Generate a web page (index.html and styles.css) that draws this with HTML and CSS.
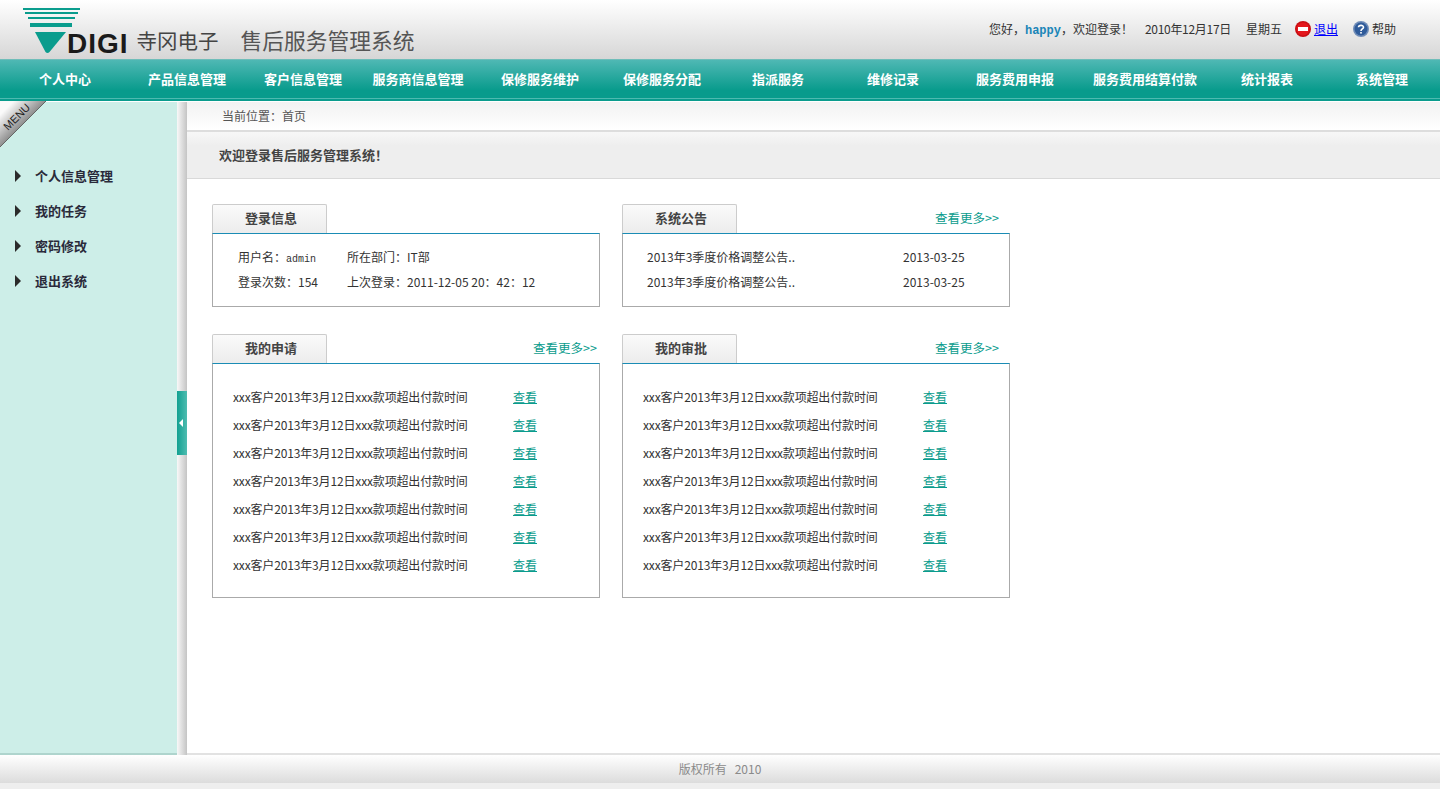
FILE: index.html
```html
<!DOCTYPE html>
<html lang="zh-CN">
<head>
  <meta charset="UTF-8" />
  <title>售后服务管理系统</title>
  <link rel="stylesheet" href="styles.css">
</head>
<body>

  <div class="top">
    <div class="logo">
      <svg class="logo-mark" width="57" height="46" viewBox="0 0 57 46">
        <path d="M0 0H57V2H0z M2 4H55V6H2z M5 9H52V11H5z M7 15H49V19H7z" fill="#0a9c8d"/>
        <path d="M12 24H43L26.500 44Q24.500 46 22.500 44z" fill="#0a9c8d"/>
      </svg>
      <span class="logo-en">DIGI</span>
      <span class="logo-cn">寺冈电子</span>
      <span class="logo-title">售后服务管理系统</span>
    </div>
    <div class="user-bar">
      <span class="greet">您好，<b>happy</b>，欢迎登录！</span>
      <span class="date">2010年12月17日</span>
      <span class="week">星期五</span>
      <svg width="16" height="16" viewBox="0 0 16 16">
        <circle cx="8" cy="8" r="8" fill="#c80f14"/>
        <circle cx="8" cy="8" r="6.500" fill="#e4171c"/>
        <rect x="3" y="6" width="10" height="4" fill="#fff"/>
      </svg>
      <a class="logout" href="#">退出</a>
      <svg class="help-icon" width="16" height="16" viewBox="0 0 16 16">
        <circle cx="8" cy="8" r="8" fill="#6f8cb8"/>
        <circle cx="8" cy="8" r="6.500" fill="#2f5b9a"/>
        <path d="M5.500 6.300C5.700 3.700 10.500 3.700 10.500 6.200C10.500 8 8 8 8 10" fill="none" stroke="#fff" stroke-width="1.600"/>
        <rect x="7.200" y="11" width="1.600" height="1.600" fill="#fff"/>
      </svg>
      <span>帮助</span>
    </div>
  </div>

  <div class="nav">
    <a href="#">个人中心</a>
    <a href="#">产品信息管理</a>
    <a href="#">客户信息管理</a>
    <a href="#">服务商信息管理</a>
    <a href="#">保修服务维护</a>
    <a href="#">保修服务分配</a>
    <a href="#">指派服务</a>
    <a href="#">维修记录</a>
    <a href="#">服务费用申报</a>
    <a href="#">服务费用结算付款</a>
    <a href="#">统计报表</a>
    <a href="#">系统管理</a>
  </div>

  <div class="middle">
    <div class="side">
      <svg class="menu-tag" width="46" height="46" viewBox="0 0 46 46">
        <defs>
          <linearGradient id="tag" x1="0" y1="0" x2="0.500" y2="0.500">
            <stop offset="0.300" stop-color="#fafafa"/>
            <stop offset="1" stop-color="#8f8f8f"/>
          </linearGradient>
        </defs>
        <path d="M0 0H46L0 46z" fill="url(#tag)"/>
        <path d="M0 46L46 0" stroke="#666" fill="none"/>
        <text class="menu-tag-text" transform="translate(8 30) rotate(-45)">MENU</text>
      </svg>
      <ul class="side-list">
        <li>个人信息管理</li>
        <li>我的任务</li>
        <li>密码修改</li>
        <li>退出系统</li>
      </ul>
    </div>
    <div class="splitter"><span class="handle"></span></div>

    <div class="main">
      <div class="crumb">当前位置：首页</div>
      <div class="welcome">欢迎登录售后服务管理系统！</div>

      <div class="panels">
        <div class="panel">
          <div class="panel-head"><span class="tab">登录信息</span></div>
          <div class="panel-body info">
            <span>用户名：<span class="mono">admin</span></span><span>所在部门：IT部</span>
            <span>登录次数：154</span><span>上次登录：2011-12-05 20：42：12</span>
          </div>
        </div>

        <div class="panel">
          <div class="panel-head"><span class="tab">系统公告</span><a class="more far" href="#">查看更多&gt;&gt;</a></div>
          <div class="panel-body notice">
            <span>2013年3季度价格调整公告..</span><span>2013-03-25</span>
            <span>2013年3季度价格调整公告..</span><span>2013-03-25</span>
          </div>
        </div>

        <div class="panel">
          <div class="panel-head"><span class="tab">我的申请</span><a class="more" href="#">查看更多&gt;&gt;</a></div>
          <div class="panel-body rows">
            <span>xxx客户2013年3月12日xxx款项超出付款时间</span><a href="#">查看</a>
            <span>xxx客户2013年3月12日xxx款项超出付款时间</span><a href="#">查看</a>
            <span>xxx客户2013年3月12日xxx款项超出付款时间</span><a href="#">查看</a>
            <span>xxx客户2013年3月12日xxx款项超出付款时间</span><a href="#">查看</a>
            <span>xxx客户2013年3月12日xxx款项超出付款时间</span><a href="#">查看</a>
            <span>xxx客户2013年3月12日xxx款项超出付款时间</span><a href="#">查看</a>
            <span>xxx客户2013年3月12日xxx款项超出付款时间</span><a href="#">查看</a>
          </div>
        </div>

        <div class="panel">
          <div class="panel-head"><span class="tab">我的审批</span><a class="more far" href="#">查看更多&gt;&gt;</a></div>
          <div class="panel-body rows">
            <span>xxx客户2013年3月12日xxx款项超出付款时间</span><a href="#">查看</a>
            <span>xxx客户2013年3月12日xxx款项超出付款时间</span><a href="#">查看</a>
            <span>xxx客户2013年3月12日xxx款项超出付款时间</span><a href="#">查看</a>
            <span>xxx客户2013年3月12日xxx款项超出付款时间</span><a href="#">查看</a>
            <span>xxx客户2013年3月12日xxx款项超出付款时间</span><a href="#">查看</a>
            <span>xxx客户2013年3月12日xxx款项超出付款时间</span><a href="#">查看</a>
            <span>xxx客户2013年3月12日xxx款项超出付款时间</span><a href="#">查看</a>
          </div>
        </div>
      </div>
    </div>
  </div>

  <div class="footer">版权所有&nbsp;&nbsp;&nbsp;2010</div>

</body>
</html>
```

FILE: styles.css
```css
body {
  margin: 0 2px 0 0;
  height: 789px;
  display: flex;
  flex-direction: column;
  overflow: hidden;
  font-family: "Noto Sans CJK SC", "Liberation Sans", sans-serif;
  font-size: 12px;
  color: #333;
  background: #fff;
}

a {
  color: #0a9c8d;
}

/* header */
.top {
  height: 59px;
  flex: none;
  display: flex;
  justify-content: space-between;
  background: linear-gradient(#fff, #d6d6d6);
}

.logo {
  display: flex;
  align-items: flex-end;
  padding: 0 0 3px 23px;
  height: 59px;
  box-sizing: border-box;
}

.logo-mark {
  align-self: flex-start;
  margin: 8px -13px 0 0;
}

.logo-en {
  font-family: "Liberation Sans", sans-serif;
  font-size: 28px;
  font-weight: bold;
  line-height: 24px;
  letter-spacing: 1px;
  color: #1a1a1a;
}

.logo-cn {
  font-size: 20.500px;
  line-height: 24px;
  color: #444;
  margin: 0 0 4px 8px;
}

.logo-title {
  font-size: 21.750px;
  line-height: 24px;
  color: #555;
  margin: 0 0 4px 22px;
}

.user-bar {
  display: flex;
  align-items: center;
  height: 57px;
  padding-right: 44px;
  color: #333;
}

.greet b {
  color: #1a86b8;
  font-family: "Liberation Mono", monospace;
  font-size: 12px;
}

.date {
  margin-left: 12px;
  letter-spacing: -0.3px;
}

.week {
  margin-left: 15px;
  margin-right: 13px;
}

.logout {
  color: #00f;
  margin-left: 3px;
}

.help-icon {
  margin: 0 3px 0 15px;
}

/* nav */
.nav {
  height: 36px;
  flex: none;
  display: grid;
  grid-template-columns: 114px 130px 102px 128px 116px 128px 104px 126px 118px 142px 102px 124px;
  padding: 0 0 2px 8px;
  align-items: center;
  border-top: 1px solid #6fbdb9;
  border-bottom: 1px solid #4dbab0;
  box-shadow: 0 2px 0 #0a9c8d;
  background: linear-gradient(#4fb8b4, #089b8c 80%);
  margin-bottom: 3px;
}

.nav a {
  color: #fff;
  font-size: 13px;
  font-weight: bold;
  text-align: center;
  text-decoration: none;
}

.nav a:last-child {
  padding-left: 4px;
}

/* left menu */
.middle {
  flex: 1;
  display: flex;
  min-height: 0;
}

.side {
  width: 177px;
  flex: none;
  position: relative;
  background: #cdeee8;
  border-bottom: 2px solid #aed4cd;
  box-sizing: border-box;
}

.menu-tag {
  position: absolute;
  top: -1px;
  left: 0;
}

.menu-tag-text {
  font-family: "Liberation Sans", sans-serif;
  font-size: 11px;
  fill: #222;
}

.side-list {
  list-style: none;
  margin: 0;
  padding: 56px 0 0 15px;
}

.side-list li {
  height: 35px;
  line-height: 35px;
  font-size: 13px;
  font-weight: bold;
  color: #2a2a3a;
  display: flex;
  align-items: center;
}

.side-list li::before {
  content: "";
  width: 0;
  height: 0;
  margin-right: 14px;
  border-left: 6px solid #2b2b2b;
  border-top: 6px solid transparent;
  border-bottom: 6px solid transparent;
}

.splitter {
  width: 10px;
  flex: none;
  position: relative;
  background: linear-gradient(90deg, #f8f8f8, #c4c4c4);
}

.handle {
  position: absolute;
  top: 289px;
  left: 0;
  width: 10px;
  height: 64px;
  background: linear-gradient(90deg, #12a091, #4ebcb0);
}

.handle::after {
  content: "";
  position: absolute;
  top: 28px;
  left: 2px;
  border-right: 4px solid #fff;
  border-top: 4px solid transparent;
  border-bottom: 4px solid transparent;
}

/* main area */
.main {
  flex: 1;
  min-width: 0;
  border-bottom: 2px solid #e2e2e2;
}

.crumb {
  height: 28px;
  line-height: 28px;
  padding-left: 35px;
  color: #555;
  background: linear-gradient(#f2f2f2, #fff);
  border-bottom: 2px solid #ddd;
}

.welcome {
  height: 46px;
  line-height: 46px;
  padding-left: 32px;
  font-size: 13px;
  font-weight: bold;
  color: #444;
  background: linear-gradient(#f7f7f7, #eee 30%);
  border-bottom: 1px solid #d9d9d9;
}

.panels {
  display: grid;
  grid-template-columns: 388px 388px;
  column-gap: 22px;
  row-gap: 27px;
  padding: 25px 0 0 25px;
  align-items: start;
}

.panel-head {
  height: 29px;
  display: flex;
  justify-content: space-between;
  align-items: center;
}

.tab {
  width: 110px;
  height: 28px;
  line-height: 26px;
  padding-left: 3px;
  text-align: center;
  font-size: 13px;
  font-weight: bold;
  color: #444;
  border: 1px solid #ccc;
  border-bottom: none;
  border-radius: 2px 2px 0 0;
  background: linear-gradient(#fafafa, #ececec);
}

.more {
  font-size: 12.500px;
  text-decoration: none;
  margin: 0 3px 2px 0;
}

.more.far {
  margin-right: 11px;
}

.panel-body {
  border: 1px solid #aaa;
  border-top: 1px solid #1a8cb5;
  box-sizing: border-box;
  display: grid;
  color: #333;
}

.mono {
  font-family: "Liberation Mono", monospace;
  font-size: 10px;
}

.info {
  height: 74px;
  padding: 10px 0 0 25px;
  grid-template-columns: 109px 1fr;
  grid-auto-rows: 25px;
  line-height: 25px;
}

.notice {
  height: 74px;
  padding: 10px 0 0 24px;
  grid-template-columns: 256px 1fr;
  grid-auto-rows: 25px;
  line-height: 25px;
}

.rows {
  height: 235px;
  padding: 19px 0 0 20px;
  grid-template-columns: 280px 1fr;
  grid-auto-rows: 28px;
  line-height: 28px;
}

.rows span {
  letter-spacing: -0.15px;
}

/* footer */
.footer {
  height: 28px;
  flex: none;
  line-height: 28px;
  text-align: center;
  color: #8a8a8a;
  background: linear-gradient(#fff, #dcdcdc);
  border-bottom: 6px solid #eee;
}
```
